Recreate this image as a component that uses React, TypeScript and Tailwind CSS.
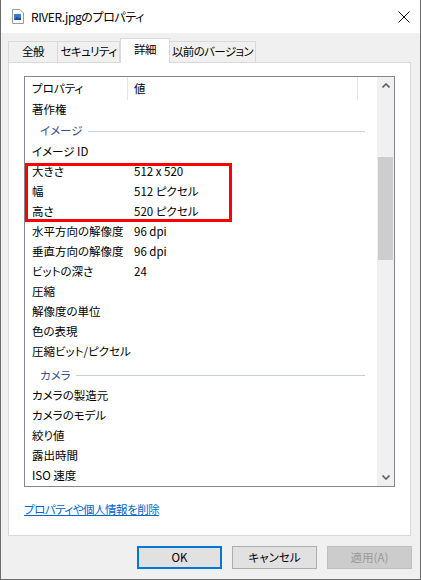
import React from 'react'

type Row = { label: string; value?: string; group?: boolean }

const rows: Row[] = [
  { label: '著作権' },
  { label: 'イメージ', group: true },
  { label: 'イメージ ID' },
  { label: '大きさ', value: '512 x 520' },
  { label: '幅', value: '512 ピクセル' },
  { label: '高さ', value: '520 ピクセル' },
  { label: '水平方向の解像度', value: '96 dpi' },
  { label: '垂直方向の解像度', value: '96 dpi' },
  { label: 'ビットの深さ', value: '24' },
  { label: '圧縮' },
  { label: '解像度の単位' },
  { label: '色の表現' },
  { label: '圧縮ビット/ピクセル' },
  { label: 'カメラ', group: true },
  { label: 'カメラの製造元' },
  { label: 'カメラのモデル' },
  { label: '絞り値' },
  { label: '露出時間' },
  { label: 'ISO 速度' },
]

const tabs = ['全般', 'セキュリティ', '詳細', '以前のバージョン']

function FileIcon() {
  return (
    <svg width="12" height="15" viewBox="0 0 12 15">
      <path d="M0.5 0.5 H8 L11.5 4 V14.5 H0.5 Z" fill="#fff" stroke="#9a9a9a" />
      <rect x="2" y="5" width="7" height="6" fill="#2f7fd6" />
      <path d="M2 11 L5 7.5 L7 9.5 L9 8 V11 Z" fill="#1b4f9c" />
    </svg>
  )
}

function Chevron({ up }: { up?: boolean }) {
  return (
    <svg width="8" height="5" viewBox="0 0 8 5">
      <path d={up ? 'M0.5 4.5 L4 1 L7.5 4.5' : 'M0.5 0.5 L4 4 L7.5 0.5'} fill="none" stroke="#606060" strokeWidth="1.6" />
    </svg>
  )
}

export default function App() {
  return (
    <div className="w-[421px] h-[580px] bg-[#f0f0f0] border-x border-b border-[#6b6b6b] flex flex-col text-[11.5px] text-black font-['Noto_Sans_CJK_JP',sans-serif] [font-feature-settings:'palt'] overflow-hidden">
      {/* title bar */}
      <div className="h-[33px] shrink-0 bg-white flex items-center">
        <div className="ml-[11px] mr-[7px] flex"><FileIcon /></div>
        <span className="text-[12px] tracking-[-0.4px]">RIVER.jpgのプロパティ</span>
        <svg className="ml-auto mr-[10px]" width="12" height="12" viewBox="0 0 12 12">
          <path d="M0.5 0.5 L11.5 11.5 M11.5 0.5 L0.5 11.5" stroke="#111" strokeWidth="1" />
        </svg>
      </div>

      {/* tabs */}
      <div className="h-[29px] shrink-0 flex items-end pl-[7px] whitespace-nowrap tracking-[-0.6px]">
        {tabs.map((t, i) =>
          i === 2 ? (
            <div key={t} className="relative z-10 -mb-px h-[25px] w-[50px] bg-white border border-b-0 border-[#d9d9d9] flex items-center justify-center pb-[2px]">
              {t}
            </div>
          ) : (
            <div
              key={t}
              className={`h-[21px] border border-b-0 border-[#d9d9d9] flex items-center justify-center ${i === 0 ? 'w-[50px]' : i === 1 ? 'w-[62px] border-l-0' : 'w-[86px] border-l-0'}`}
            >
              {t}
            </div>
          )
        )}
      </div>

      {/* panel */}
      <div className="ml-[7px] w-[403px] h-[474px] shrink-0 bg-white border border-[#d9d9d9] pt-[13px] pl-[15px]">
        <div className="w-[371px] h-[411px] border border-[#828790] flex">
          <div className="relative w-[352px] flex flex-col">
            <div className="h-[23px] flex">
              <div className="w-[103px] border-r border-[#e5e5e5] pl-[7px] flex items-center">プロパティ</div>
              <div className="w-[230px] border-r border-[#e5e5e5] pl-[6px] flex items-center">値</div>
            </div>
            {rows.map((r) =>
              r.group ? (
                <div key={r.label} className={`flex items-center pl-[15px] ${r.label === 'カメラ' ? 'h-[24px] pt-[3px]' : 'h-[22px]'}`}>
                  <span className="text-[#3c4f8c]">{r.label}</span>
                  <div className="flex-1 h-px bg-[#c5d0dd] ml-[5px] mr-[12px]" />
                </div>
              ) : (
                <div key={r.label} className="h-[20px] flex items-center">
                  <div className="w-[103px] pl-[7px] whitespace-nowrap">{r.label}</div>
                  <div className="pl-[6px] whitespace-nowrap">{r.value}</div>
                </div>
              )
            )}
            <div className="absolute left-0 top-[86px] w-[207px] h-[59px] border-[3px] border-[#ff0000]" />
          </div>
          <div className="w-[17px] bg-[#f0f0f0] flex flex-col">
            <div className="h-[17px] flex items-center justify-center"><Chevron up /></div>
            <div className="mt-[63px] mx-px h-[103px] bg-[#cdcdcd]" />
            <div className="flex-1" />
            <div className="h-[17px] flex items-center justify-center"><Chevron /></div>
          </div>
        </div>
        <div className="mt-[14px] leading-[16px]">
          <span className="text-[#0066cc] underline tracking-[-0.5px]">プロパティや個人情報を削除</span>
        </div>
      </div>

      {/* buttons */}
      <div className="flex justify-end gap-[10px] pr-[8px] pt-[10px]">
        <div className="w-[85px] h-[23px] bg-[#e1e1e1] border-2 border-[#0078d7] flex items-center justify-center">OK</div>
        <div className="w-[85px] h-[23px] bg-[#e1e1e1] border border-[#adadad] flex items-center justify-center">キャンセル</div>
        <div className="w-[85px] h-[23px] bg-[#cccccc] border border-[#bfbfbf] text-[#9a9a9a] flex items-center justify-center">適用(A)</div>
      </div>
    </div>
  )
}
